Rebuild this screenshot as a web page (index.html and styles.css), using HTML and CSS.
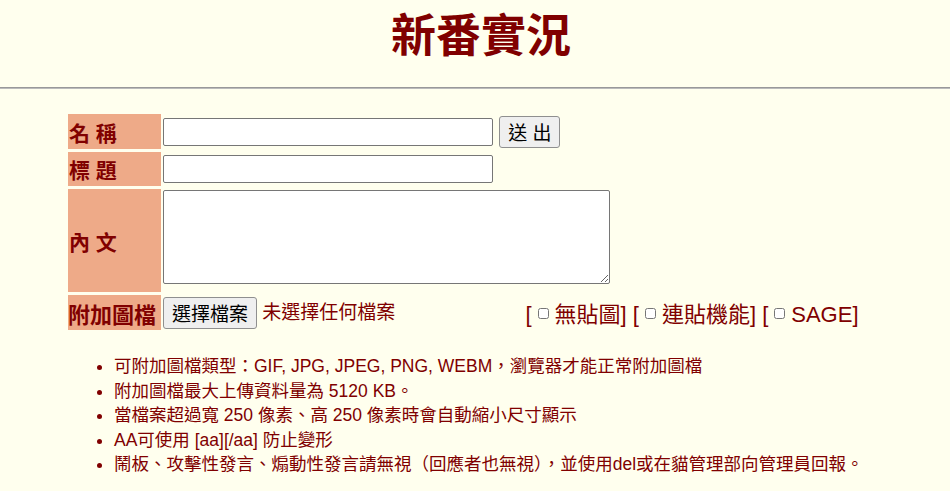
FILE: index.html
```html
<!DOCTYPE html>
<html lang="zh-Hant">
<head>
  <meta charset="UTF-8">
  <meta name="viewport" content="width=device-width, initial-scale=1.0">
  <title>新番實況</title>
  <link rel="stylesheet" href="styles.css">
</head>
<body>
  <h1 class="board-title">新番實況</h1>
  <hr class="top-rule">

  <form class="post-form" id="postForm">
    <table class="form-table">
      <tr class="row-name">
        <td class="label">名 稱</td>
        <td class="field">
          <input type="text" name="name" class="text-input">
          <button type="submit" class="send-btn">送 出</button>
        </td>
      </tr>
      <tr class="row-sub">
        <td class="label">標 題</td>
        <td class="field">
          <input type="text" name="sub" class="text-input">
        </td>
      </tr>
      <tr class="row-com">
        <td class="label">內 文</td>
        <td class="field">
          <textarea name="com" class="com-input"></textarea>
        </td>
      </tr>
      <tr class="row-file">
        <td class="label">附加圖檔</td>
        <td class="field file-field">
          <span class="file-box">
            <button type="button" class="file-btn">選擇檔案</button>
            <span class="file-name">未選擇任何檔案</span>
          </span>
          <span class="options">
            [<input type="checkbox" name="noimg">無貼圖]
            [<input type="checkbox" name="cont">連貼機能]
            [<input type="checkbox" name="sage">SAGE]
          </span>
        </td>
      </tr>
    </table>

    <ul class="rules">
      <li>可附加圖檔類型：GIF, JPG, JPEG, PNG, WEBM，瀏覽器才能正常附加圖檔</li>
      <li>附加圖檔最大上傳資料量為 5120 KB。</li>
      <li>當檔案超過寬 250 像素、高 250 像素時會自動縮小尺寸顯示</li>
      <li>AA可使用 [aa][/aa] 防止變形</li>
      <li>鬧板、攻擊性發言、煽動性發言請無視（回應者也無視），並使用del或在貓管理部向管理員回報。</li>
    </ul>
  </form>
</body>
</html>
```

FILE: styles.css
```css
body {
  margin: 0;
  background: #FFFFEE;
  color: #800000;
  font-family: "Liberation Sans", "Noto Sans CJK TC", sans-serif;
}
.board-title {
  margin: 0 0 0 12px;
  padding-top: 5px;
  font-size: 45px;
  line-height: 64px;
  text-align: center;
  font-weight: bold;
}
.top-rule {
  margin: 18px 0 0;
  border: 0;
  border-top: 1px solid #999;
  border-bottom: 1px solid #bbb;
  height: 0;
}
.post-form {
  margin-left: 66px;
}
.form-table {
  margin-top: 22px;
  border-spacing: 2px 3px;
}
.form-table td {
  padding: 0;
}
.label {
  width: 92px;
  padding: 0 0 0 1px !important;
  background: #EEAA88;
  font-size: 21px;
  font-weight: bold;
  white-space: nowrap;
}
.row-name .label { height: 35px; }
.row-sub .label { height: 34px; }
.row-com .label { height: 103px; }
.row-file .label { height: 35px; font-size: 22px; padding-left: 0 !important; }
.field {
  vertical-align: middle;
  white-space: nowrap;
}
.text-input {
  width: 330px;
  height: 28px;
  box-sizing: border-box;
  border: 1px solid #767676;
  border-radius: 2px;
  background: #fff;
  vertical-align: middle;
}
.send-btn, .file-btn {
  height: 32px;
  padding: 0;
  border: 1px solid #8f8f8f;
  border-radius: 3px;
  background: #efefef;
  color: #000;
  font-family: "Liberation Sans", "Noto Sans CJK TC", sans-serif;
  font-size: 19px;
  vertical-align: middle;
}
.send-btn {
  margin-left: 2px;
  width: 61px;
}
.com-input {
  display: block;
  width: 447px;
  height: 94px;
  box-sizing: border-box;
  margin: 1px 0 8px;
  border: 1px solid #767676;
  border-radius: 2px;
  background: #fff;
}
.file-box {
  display: inline-block;
  width: 358px;
  font-size: 19px;
  vertical-align: middle;
}
.file-btn {
  width: 94px;
}
.file-name {
  vertical-align: -1px;
}
.options {
  font-size: 22px;
  vertical-align: middle;
  position: relative;
  top: -1px;
}
.options input {
  width: 11px;
  height: 11px;
  margin: 0 6px 0 6px;
  vertical-align: 3px;
}
.rules {
  margin: 21px 0 0 8px;
  padding-left: 40px;
  font-size: 17.5px;
  line-height: 24.5px;
}
```
